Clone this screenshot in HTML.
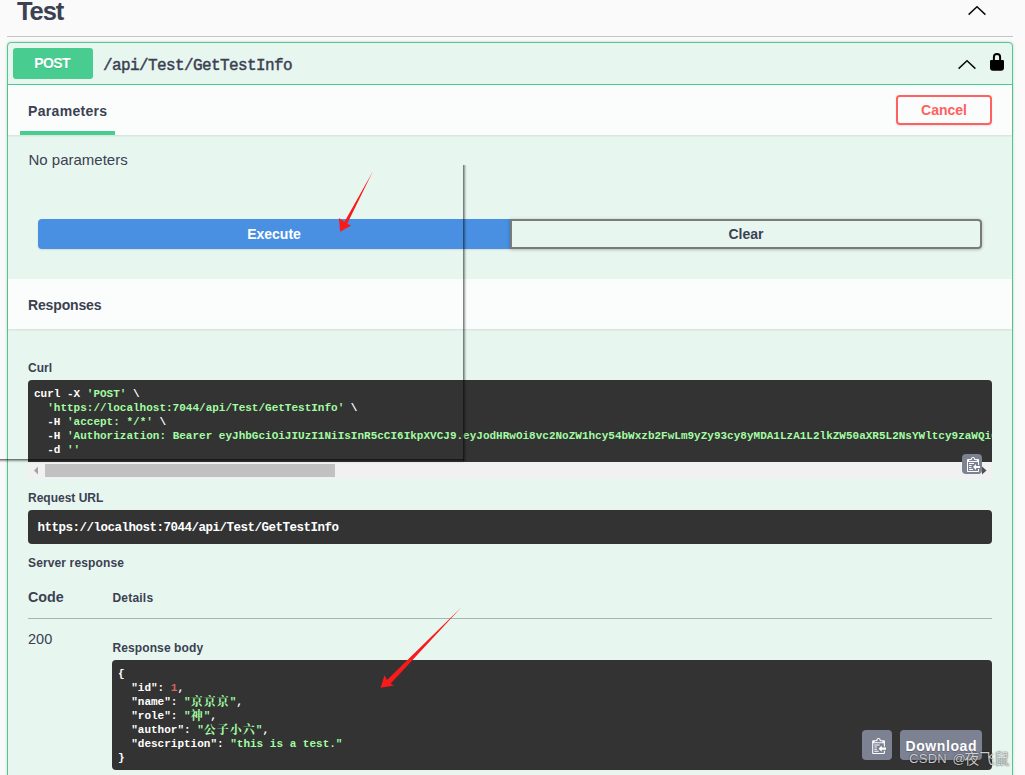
<!DOCTYPE html>
<html lang="en">
<head>
<meta charset="utf-8">
<title>Swagger UI</title>
<style>
html,body{margin:0;padding:0;}
body{width:1025px;height:775px;overflow:hidden;background:#fafafa;position:relative;
  font-family:"Liberation Sans","Noto Sans CJK SC",sans-serif;color:#3b4151;}
.abs{position:absolute;white-space:nowrap;}
.t{position:absolute;white-space:nowrap;line-height:1;font-weight:700;color:#3b4151;}
#tag{left:17px;top:-1.5px;font-size:25.5px;letter-spacing:-1.1px;}
#hr{left:7px;top:36px;width:1006px;height:1px;background:#c3c4c9;}
#opblock{left:7px;top:42px;width:1004px;height:760px;border:1px solid #49cc90;border-radius:4px;
  background:#e8f6f0;box-shadow:0 0 3px rgba(0,0,0,.19);}
#sumline{left:8px;top:84px;width:1004px;height:1px;background:#49cc90;}
#post{left:13px;top:48px;width:78px;padding-right:2px;height:31px;border-radius:3px;background:#49cc90;color:#fff;
  font-size:14px;letter-spacing:-0.6px;font-weight:700;text-align:center;line-height:31px;text-shadow:0 1px 0 rgba(0,0,0,.1);}
#path{left:103px;top:57px;font-family:"Liberation Mono",monospace;font-size:16px;font-weight:400;line-height:18px;color:#3b4151;letter-spacing:-0.6px;-webkit-text-stroke:0.45px #3b4151;}
.sechead{left:8px;width:1004px;height:50px;background:#fafdfc;box-shadow:0 1px 2px rgba(0,0,0,.1);}
#underline{left:20px;top:131px;width:95px;height:4px;background:#49cc90;}
#cancel{left:896px;top:95px;width:92px;height:26px;border:2px solid #ff6060;border-radius:4px;
  color:#ff6060;font-size:14px;font-weight:700;text-align:center;line-height:26px;box-shadow:0 1px 2px rgba(0,0,0,.1);}
#exec{left:38px;top:219px;width:472px;height:30px;background:#4990e2;border-radius:4px 0 0 4px;color:#fff;
  font-size:14px;font-weight:700;text-align:center;line-height:30px;box-shadow:0 1px 2px rgba(0,0,0,.1);}
#clear{left:510px;top:219px;width:468px;height:26px;border:2px solid #7a7a7a;border-radius:0 4px 4px 0;color:#3b4151;
  font-size:14px;font-weight:700;text-align:center;line-height:26px;box-shadow:0 1px 3px rgba(0,0,0,.18),0 0 4px rgba(0,0,0,.1);}
.code{position:absolute;background:#333;border-radius:4px;color:#fff;font-family:"Liberation Mono",monospace;
  font-size:11px;font-weight:700;line-height:14px;white-space:pre;overflow:hidden;padding:7px 6px 5px 6px;box-sizing:border-box;margin:0;}
.g{color:#a2fca2;}
.r{color:#d36363;}
.ln{height:14px;line-height:14px;white-space:pre;overflow:visible;}
.cj{font-family:"Liberation Mono","Noto Serif CJK SC",monospace;font-size:12px;letter-spacing:1px;font-weight:700;line-height:14px;display:inline-block;height:14px;vertical-align:top;position:relative;top:1px;}
#vline{left:463px;top:165px;width:1px;height:296px;background:rgba(0,0,0,.48);box-shadow:1px 0 0 rgba(0,0,0,.3),2px 0 0 rgba(0,0,0,.12),3px 0 0 rgba(0,0,0,.03);}
#hline{left:0;top:459px;width:464px;height:1px;background:rgba(0,0,0,.52);box-shadow:0 1px 0 rgba(0,0,0,.3),0 2px 0 rgba(0,0,0,.12),0 3px 0 rgba(0,0,0,.03);}
</style>
</head>
<body>
<div class="t" id="tag">Test</div>
<svg class="abs" style="left:966px;top:3px" width="22" height="15" viewBox="0 0 22 15"><path d="M2.6 11.6 L11 3.7 L19.4 11.6" fill="none" stroke="#0a0a0a" stroke-width="1.45"/></svg>
<div class="abs" id="hr"></div>

<div class="abs" id="opblock"></div>
<div class="abs" id="post">POST</div>
<div class="abs" id="path">/api/Test/GetTestInfo</div>
<svg class="abs" style="left:956px;top:57px" width="22" height="15" viewBox="0 0 22 15"><path d="M2.6 11.6 L11 3.7 L19.4 11.6" fill="none" stroke="#0a0a0a" stroke-width="1.45"/></svg>
<svg class="abs" style="left:989px;top:52px" width="16" height="20" viewBox="0 0 16 20"><path d="M3.9 7.9 V5.1 a4.1 4.1 0 0 1 8.2 0 V7.9 h1.6 a1.3 1.3 0 0 1 1.3 1.3 v6.5 a3 3 0 0 1 -3 3 h-8 a3 3 0 0 1 -3 -3 v-6.5 a1.3 1.3 0 0 1 1.3 -1.3 z M5.9 7.9 h4.2 V5.1 a2.1 2.1 0 0 0 -4.2 0 z" fill="#000" fill-rule="evenodd"/></svg>
<div class="abs" id="sumline"></div>

<div class="abs sechead" style="top:85px"></div>
<div class="t" style="left:28px;top:103.5px;font-size:14px;letter-spacing:0.32px">Parameters</div>
<div class="abs" id="underline"></div>
<div class="abs" id="cancel">Cancel</div>

<div class="t" style="left:28.5px;top:152px;font-size:15px;font-weight:400">No parameters</div>

<div class="abs" id="exec">Execute</div>
<div class="abs" id="clear">Clear</div>

<div class="abs sechead" style="top:279px"></div>
<div class="t" style="left:28px;top:298px;font-size:14px;letter-spacing:-0.15px">Responses</div>

<div class="t" style="left:28px;top:362px;font-size:12px">Curl</div>
<div class="abs" style="left:28px;top:462px;width:964px;height:17px;background:#f1f1f1"></div>
<pre class="code" style="left:28px;top:380px;width:964px;height:82px;border-radius:4px 4px 0 0">curl -X <span class="g">'POST'</span> \
  <span class="g">'https://localhost:7044/api/Test/GetTestInfo'</span> \
  -H <span class="g">'accept: */*'</span> \
  -H <span class="g">'Authorization: Bearer eyJhbGciOiJIUzI1NiIsInR5cCI6IkpXVCJ9.eyJodHRwOi8vc2NoZW1hcy54bWxzb2FwLm9yZy93cy8yMDA1LzA1L2lkZW50aXR5L2NsYWltcy9zaWQiOiIxIiwiaHR0cDovL3NjaGVtYXMueG1sc29hcC5vcmcvd3MvMjAwNS8wNS9pZGVudGl0eS9jbGFpbXMvbmFtZSI6IuS6rOS6rOS6rCJ9'</span> \
  -d <span class="g">''</span></pre>
<div class="abs" style="left:45px;top:464px;width:290px;height:13px;background:#c1c1c1"></div>
<svg class="abs" style="left:28px;top:462px" width="17" height="17" viewBox="0 0 17 17"><path d="M6 8.5 L10 4.5 V12.5 z" fill="#a3a3a3"/></svg>

<div class="t" style="left:28px;top:492px;font-size:12px">Request URL</div>
<pre class="code" style="left:28px;top:510px;width:964px;height:34px;font-size:12.5px;letter-spacing:-0.5px;padding:11px 10px 8px 9.5px;line-height:15px">https://localhost:7044/api/Test/GetTestInfo</pre>

<div class="t" style="left:28px;top:557px;font-size:12px;letter-spacing:0.13px">Server response</div>
<div class="t" style="left:28px;top:589.5px;font-size:14.3px">Code</div>
<div class="t" style="left:112.5px;top:592px;font-size:12px;letter-spacing:0.2px">Details</div>
<div class="abs" style="left:28px;top:618px;width:964px;height:1px;background:#a3b8b1"></div>
<div class="t" style="left:28px;top:631.5px;font-size:14.5px;font-weight:400">200</div>
<div class="t" style="left:112.5px;top:642px;font-size:12px;letter-spacing:0.1px">Response body</div>
<div class="code" style="left:112px;top:660px;width:880px;height:110px"><div class="ln">{</div><div class="ln">  "id": <span class="r">1</span>,</div><div class="ln">  "name": <span class="g">"<span class="cj">京京京</span>"</span>,</div><div class="ln">  "role": <span class="g">"<span class="cj">神</span>"</span>,</div><div class="ln">  "author": <span class="g">"<span class="cj">公子小六</span>"</span>,</div><div class="ln">  "description": <span class="g">"this is a test."</span></div><div class="ln">}</div></div>


<svg class="abs" style="left:0;top:0;pointer-events:none" width="1025" height="775" viewBox="0 0 1025 775">
<polygon points="372.7,171.7 344.5,221.7 338.9,218.1 340.1,231.8 351.2,225.4 347.2,223.7" fill="#f91b1b"/>
<polygon points="461.4,607.3 387,680 384.5,675.2 380.6,687.7 394.2,685.4 390.5,683.8" fill="#f91b1b"/>
</svg>
<div class="abs" style="left:962px;top:454px;width:20px;height:20px;border-radius:4px;background:#7d8293"></div>
<svg class="abs" style="left:964.5px;top:457px" width="15" height="16" viewBox="0 0 15 16"><g transform="translate(2,-1)"><path fill="#fff" fill-rule="evenodd" d="M2 13h4v1H2v-1zm5-6H2v1h5V7zm2 3V8l-3 3 3 3v-2h5v-2H9zM4.5 9H2v1h2.5V9zM2 12h2.5v-1H2v1zm9 1h1v2c-.02.28-.11.52-.3.7-.19.18-.42.28-.7.3H1c-.55 0-1-.45-1-1V4c0-.55.45-1 1-1h3c0-1.11.89-2 2-2 1.11 0 2 .89 2 2h3c.55 0 1 .45 1 1v5h-1V6H1v9h10v-2zM2 5h8c0-.55-.45-1-1-1H8c-.55 0-1-.45-1-1s-.45-1-1-1-1 .45-1 1-.45 1-1 1H3c-.55 0-1 .45-1 1z"/></g></svg>
<svg class="abs" style="left:982px;top:466px" width="5" height="9" viewBox="0 0 5 9"><path d="M0 0.5 L4.5 4.5 L0 8.5 z" fill="#505050"/></svg>

<div class="abs" style="left:862px;top:730px;width:30px;height:30px;border-radius:4px;background:#7d8293"></div>
<svg class="abs" style="left:870px;top:737.5px" width="16" height="17" viewBox="0 0 15 16"><g transform="translate(2,-1)"><path fill="#fff" fill-rule="evenodd" d="M2 13h4v1H2v-1zm5-6H2v1h5V7zm2 3V8l-3 3 3 3v-2h5v-2H9zM4.5 9H2v1h2.5V9zM2 12h2.5v-1H2v1zm9 1h1v2c-.02.28-.11.52-.3.7-.19.18-.42.28-.7.3H1c-.55 0-1-.45-1-1V4c0-.55.45-1 1-1h3c0-1.11.89-2 2-2 1.11 0 2 .89 2 2h3c.55 0 1 .45 1 1v5h-1V6H1v9h10v-2zM2 5h8c0-.55-.45-1-1-1H8c-.55 0-1-.45-1-1s-.45-1-1-1-1 .45-1 1-.45 1-1 1H3c-.55 0-1 .45-1 1z"/></g></svg>
<div class="abs" id="dl" style="left:900px;top:730px;width:82px;height:30px;border-radius:4px;background:#7d8293;color:#fff;font-size:14px;font-weight:700;text-align:center;line-height:32px;letter-spacing:0.6px;text-indent:0.6px;text-shadow:0 1px 1px rgba(0,0,0,.25)">Download</div>
<div class="abs" id="wm" style="left:909px;top:749px;font-size:13px;line-height:18px;color:rgba(255,255,255,.78);letter-spacing:0.3px;word-spacing:1.6px;text-shadow:0 0 1px rgba(0,0,0,.7),0 0 2px rgba(0,0,0,.35)">CSDN @<span style="font-size:15px;margin-left:-1.8px;letter-spacing:0;position:relative;top:0.6px">夜飞鼠</span></div>
<div class="abs" id="vline"></div>
<div class="abs" id="hline"></div>
</body>
</html>
